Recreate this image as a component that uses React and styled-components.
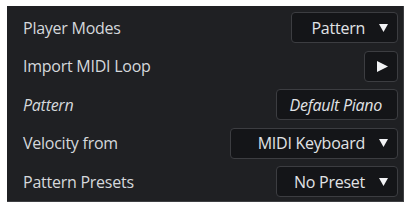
import React from "react";
import styled, { createGlobalStyle } from "styled-components";

const Global = createGlobalStyle`
  html, body { margin: 0; padding: 0; background: #ffffff; }
  body { font-family: "Open Sans", "Noto Sans", sans-serif; }
`;

const Page = styled.div`
  padding: 6px 0 0 7px;
`;

const Panel = styled.div`
  width: 397px;
  height: 196px;
  box-sizing: border-box;
  background: #1f2023;
  border-right: 1px solid #3e3f42;
  border-bottom: 1px solid #3e3f42;
  padding: 6px 5px 5px 16px;
  display: flex;
  flex-direction: column;
  gap: 7.5px;
`;

const Row = styled.div`
  height: 31px;
  display: flex;
  align-items: center;
  justify-content: space-between;
`;

const Label = styled.span`
  color: #d5d8dc;
  font-size: 16px;
  font-style: ${(p) => (p.$italic ? "italic" : "normal")};
  letter-spacing: -0.25px;
`;

const Control = styled.div`
  height: 31px;
  box-sizing: border-box;
  width: ${(p) => p.$w}px;
  background: #141518;
  border: 1px solid #3c3d41;
  border-radius: 4px;
  display: flex;
  align-items: center;
  justify-content: ${(p) => (p.$center ? "center" : "flex-end")};
  padding: ${(p) => p.$pad || "0 9px 0 0"};
  color: #e1e3e6;
  font-size: 16px;
  font-style: ${(p) => (p.$italic ? "italic" : "normal")};
  letter-spacing: -0.25px;
`;

const Arrow = styled.svg`
  margin-left: 14px;
  flex: none;
`;

const Down = () => (
  <Arrow width="9" height="8" viewBox="0 0 9 8">
    <polygon points="0,0 9,0 4.5,8" fill="#f2f3f5" />
  </Arrow>
);

const Play = () => (
  <svg width="11" height="11" viewBox="0 0 11 11">
    <polygon points="0,0 11,5.5 0,11" fill="#f2f3f5" />
  </svg>
);

export default function App() {
  return (
    <>
      <Global />
      <Page>
        <Panel>
          <Row>
            <Label>Player Modes</Label>
            <Control $w={107}>
              Pattern
              <Down />
            </Control>
          </Row>
          <Row>
            <Label>Import MIDI Loop</Label>
            <Control $w={34} $center $pad="0 0 0 2px">
              <Play />
            </Control>
          </Row>
          <Row>
            <Label $italic>Pattern</Label>
            <Control $w={122} $italic $pad="0 15px 0 0">
              Default Piano
            </Control>
          </Row>
          <Row>
            <Label>Velocity from</Label>
            <Control $w={168}>
              MIDI Keyboard
              <Down />
            </Control>
          </Row>
          <Row>
            <Label>Pattern Presets</Label>
            <Control $w={122}>
              No Preset
              <Down />
            </Control>
          </Row>
        </Panel>
      </Page>
    </>
  );
}
